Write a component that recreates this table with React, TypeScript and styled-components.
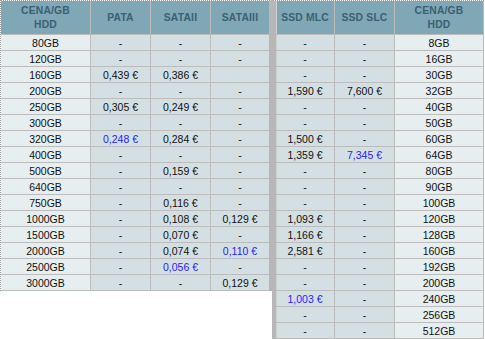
import React from "react";
import styled, { createGlobalStyle } from "styled-components";

const GlobalStyle = createGlobalStyle`
    html, body {
        margin: 0;
        padding: 0;
        background: #ffffff;
    }
    body {
        font-family: "Liberation Sans", Arial, sans-serif;
    }
`;

const Page = styled.div`
    display: flex;
    align-items: flex-start;
    width: 485px;
`;

const PriceTable = styled.table<{ $side: "left" | "right" }>`
    border-collapse: separate;
    border-spacing: 0;
    table-layout: fixed;
    width: ${props => props.$side === "left" ? "272px" : "212px"};
    border-top: 1px dotted #9c9c9c;
    ${props => props.$side === "left"
        ? `border-left: 1px dotted #9c9c9c;
           border-right: 3px solid #b7b7b7;`
        : `border-left: 4px solid #b7b7b7;`}

    th, td {
        box-sizing: border-box;
        padding: 0;
        text-align: center;
        vertical-align: middle;
        border-right: 1px solid #bcbcbc;
        border-bottom: 1px solid #bcbcbc;
    }
    ${props => props.$side === "left" ? `
    th:last-child, td:last-child {
        border-right: 0;
    }` : `
    th:first-child, td:first-child {
        box-shadow: inset 1px 0 0 #cfcfcf;
    }`}
`;

const Col = styled.col<{ $w: number }>`
    width: ${props => props.$w}px;
`;

const HeadCell = styled.th`
    height: 34px;
    background-color: #7fa7b6;
    color: #3b6072;
    font-size: 10.3px;
    font-weight: bold;
    line-height: 14px;
    letter-spacing: 0.2px;
`;

const Cell = styled.td<{ $label?: boolean; $blue?: boolean }>`
    height: 16px;
    background-color: ${props => props.$label ? "#e6eef0" : "#d3dfe3"};
    color: ${props => props.$blue ? "#2424ff" : "#111111"};
    font-size: 10.5px;
    line-height: 12px;
    white-space: nowrap;
`;

type Price = string | { v: string; blue: true };

const blue = (v: string): Price => ({ v, blue: true });

const hddRows: [string, Price, Price, Price][] = [
    ["80GB", "-", "-", "-"],
    ["120GB", "-", "-", "-"],
    ["160GB", "0,439 €", "0,386 €", ""],
    ["200GB", "-", "-", "-"],
    ["250GB", "0,305 €", "0,249 €", "-"],
    ["300GB", "-", "-", "-"],
    ["320GB", blue("0,248 €"), "0,284 €", "-"],
    ["400GB", "-", "-", "-"],
    ["500GB", "-", "0,159 €", "-"],
    ["640GB", "-", "-", "-"],
    ["750GB", "-", "0,116 €", "-"],
    ["1000GB", "-", "0,108 €", "0,129 €"],
    ["1500GB", "-", "0,070 €", "-"],
    ["2000GB", "-", "0,074 €", blue("0,110 €")],
    ["2500GB", "-", blue("0,056 €"), "-"],
    ["3000GB", "-", "-", "0,129 €"],
];

const ssdRows: [Price, Price, string][] = [
    ["-", "-", "8GB"],
    ["-", "-", "16GB"],
    ["-", "-", "30GB"],
    ["1,590 €", "7,600 €", "32GB"],
    ["-", "-", "40GB"],
    ["-", "-", "50GB"],
    ["1,500 €", "-", "60GB"],
    ["1,359 €", blue("7,345 €"), "64GB"],
    ["-", "-", "80GB"],
    ["-", "-", "90GB"],
    ["-", "-", "100GB"],
    ["1,093 €", "-", "120GB"],
    ["1,166 €", "-", "128GB"],
    ["2,581 €", "-", "160GB"],
    ["-", "-", "192GB"],
    ["-", "-", "200GB"],
    [blue("1,003 €"), "-", "240GB"],
    ["-", "-", "256GB"],
    ["-", "-", "512GB"],
];

function PriceCell({ price }: { price: Price }) {
    if (typeof price === "string") return <Cell>{price}</Cell>;
    return <Cell $blue>{price.v}</Cell>;
}

function CenaHead() {
    return <HeadCell>CENA/GB<br />HDD</HeadCell>;
}

export default function App() {
    return (
        <Page>
            <GlobalStyle />
            <PriceTable $side="left">
                <colgroup>
                    <Col $w={90} />
                    <Col $w={60} />
                    <Col $w={60} />
                    <Col $w={58} />
                </colgroup>
                <thead>
                    <tr>
                        <CenaHead />
                        <HeadCell>PATA</HeadCell>
                        <HeadCell>SATAII</HeadCell>
                        <HeadCell>SATAIII</HeadCell>
                    </tr>
                </thead>
                <tbody>
                    {hddRows.map(([size, pata, sata2, sata3]) => (
                        <tr key={size}>
                            <Cell $label>{size}</Cell>
                            <PriceCell price={pata} />
                            <PriceCell price={sata2} />
                            <PriceCell price={sata3} />
                        </tr>
                    ))}
                </tbody>
            </PriceTable>
            <PriceTable $side="right">
                <colgroup>
                    <Col $w={59} />
                    <Col $w={60} />
                    <Col $w={89} />
                </colgroup>
                <thead>
                    <tr>
                        <HeadCell>SSD MLC</HeadCell>
                        <HeadCell>SSD SLC</HeadCell>
                        <CenaHead />
                    </tr>
                </thead>
                <tbody>
                    {ssdRows.map(([mlc, slc, size]) => (
                        <tr key={size}>
                            <PriceCell price={mlc} />
                            <PriceCell price={slc} />
                            <Cell $label>{size}</Cell>
                        </tr>
                    ))}
                </tbody>
            </PriceTable>
        </Page>
    );
}
